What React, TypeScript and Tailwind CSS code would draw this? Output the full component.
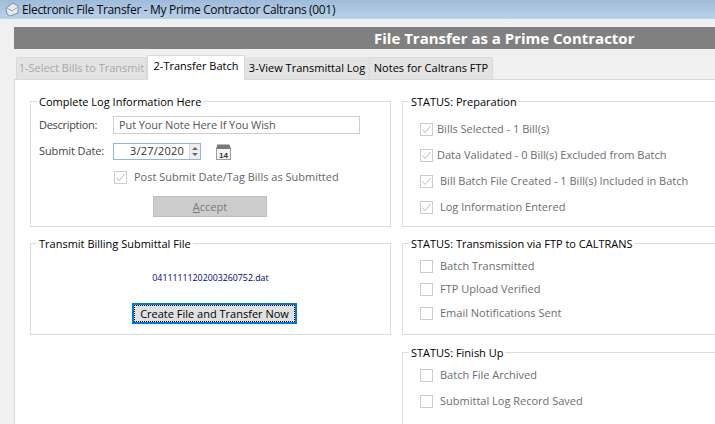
import React from 'react';

const font = { fontFamily: '"Open Sans", "Noto Sans", sans-serif' };

function Check({ checked, className = '' }: { checked?: boolean; className?: string }) {
  return (
    <span className={`w-[13px] h-[13px] border border-[#cccccc] bg-white shrink-0 flex items-center justify-center ${className}`}>
      {checked && (
        <svg width="11" height="11" viewBox="0 0 11 11" fill="none">
          <path d="M1.5 5.5 L4.2 8.5 L9.5 2" stroke="#bcbcbc" strokeWidth="1" />
        </svg>
      )}
    </span>
  );
}

function StatusRow({ label, checked, gap, height }: { label: string; checked?: boolean; gap: string; height: string }) {
  return (
    <div className={`flex items-center text-[11px] text-[#6d6d6d] ${height}`}>
      <Check checked={checked} />
      <span className={`whitespace-nowrap ${gap}`}>{label}</span>
    </div>
  );
}

function Group({ title, className, children }: { title: string; className: string; children: React.ReactNode }) {
  return (
    <fieldset className={`border-[1px] border-[#dcdcdc] m-0 shrink-0 ${className}`}>
      <legend className="ml-[6px] px-[2px] text-[11px] leading-[13px] text-black whitespace-nowrap">{title}</legend>
      {children}
    </fieldset>
  );
}

function CalendarIcon() {
  return (
    <svg width="15" height="17" viewBox="0 0 15 17" className="ml-[15px]">
      <rect x="0.5" y="4.5" width="14" height="12" fill="#f4f4f4" stroke="#9a9a9a" />
      <rect x="1" y="2" width="13" height="4" fill="#7a7a7a" />
      <path d="M2 1v2M4 1v2M6 1v2M8 1v2M10 1v2M12 1v2" stroke="#777777" strokeWidth="1" />
      <text x="7.5" y="15" textAnchor="middle" fontSize="8" fontWeight="700" fill="#333333" fontFamily="Liberation Sans, sans-serif">14</text>
    </svg>
  );
}

export default function App() {
  return (
    <div className="w-[715px] h-[424px] overflow-hidden bg-[#f0f0f0] flex flex-col" style={font}>
      {/* title bar */}
      <div className="h-[19px] shrink-0 bg-gradient-to-b from-[#a0bbd9] to-[#b9d2ec] flex items-center pl-[4px]">
        <svg width="16" height="15" viewBox="0 0 16 15" className="shrink-0">
          <path d="M2 6 L9 1 L14 4 L14 11 L6 14 L3 12 Z" fill="#e6ebf2" stroke="#7f8ea3" strokeWidth="1" />
          <path d="M3 6 L8 9 L14 5" fill="none" stroke="#9aa8ba" strokeWidth="1" />
        </svg>
        <span className="ml-[2px] text-[12px] leading-[16px] text-[#0a0a0a] whitespace-nowrap tracking-[-0.33px]">Electronic File Transfer - My Prime Contractor Caltrans (001)</span>
      </div>

      <div className="flex-1 min-h-0 pl-[14px] pt-[8px] flex flex-col">
        {/* heading band */}
        <div className="h-[22px] shrink-0 bg-[#808080] flex items-center">
          <span className="ml-[360px] text-[15px] leading-[18px] font-bold text-white whitespace-nowrap">File Transfer as a Prime Contractor</span>
        </div>

        {/* tabs */}
        <div className="flex items-end h-[30px] shrink-0 pl-[2px] text-[11px] whitespace-nowrap">
          <div className="h-[22px] w-[131px] bg-[#e3e3e3] border border-b-0 border-[#d9d9d9] rounded-t-[2px] text-[#a8a8a8] flex items-center justify-center">1-Select Bills to Transmit</div>
          <div className="h-[25px] w-[98px] -mb-[1px] relative z-10 bg-white border border-b-0 border-[#d9d9d9] text-black flex items-center justify-center pb-[3px]">2-Transfer Batch</div>
          <div className="h-[22px] w-[125px] bg-[#e3e3e3] border-r border-[#d9d9d9] text-black flex items-center justify-center">3-View Transmittal Log</div>
          <div className="h-[22px] w-[123px] bg-[#e3e3e3] border-r border-t border-[#d9d9d9] rounded-t-[2px] text-black flex items-center justify-center">Notes for Caltrans FTP</div>
        </div>

        {/* page */}
        <div className="flex-1 min-h-0 bg-white border-t border-l border-[#d9d9d9] pl-[15px] pt-[15px] flex gap-[11px] overflow-hidden">
          <div className="w-[361px] shrink-0 flex flex-col gap-[10px]">
            <Group title="Complete Log Information Here" className="h-[132px]">
              <div className="pl-[8px] pt-[8px]">
                <div className="flex items-center h-[18px] text-[11px] text-[#444444]">
                  <span className="w-[74px] tracking-[-0.3px]">Description:</span>
                  <div className="w-[247px] h-[18px] border border-[#cfcfcf] bg-white pl-[5px] leading-[16px] text-[#555555] tracking-[-0.1px]">Put Your Note Here If You Wish</div>
                </div>
                <div className="flex items-center h-[17px] mt-[9px] text-[11px] text-[#444444]">
                  <span className="w-[74px] tracking-[-0.1px]">Submit Date:</span>
                  <div className="w-[88px] h-[17px] border border-[#8db6df] bg-white flex items-center justify-end text-[#333333]">
                    <span className="pr-[5px] tracking-[0.2px]">3/27/2020</span>
                    <span className="w-[11px] h-[15px] bg-[#eeeeee] border-l border-[#d6d6d6] flex flex-col items-center justify-center gap-[3px]">
                      <span className="w-0 h-0 border-x-[3px] border-x-transparent border-b-[3px] border-b-[#666666]" />
                      <span className="w-0 h-0 border-x-[3px] border-x-transparent border-t-[3px] border-t-[#666666]" />
                    </span>
                  </div>
                  <CalendarIcon />
                </div>
                <div className="flex items-center h-[14px] mt-[10px] ml-[75px] text-[11px] text-[#666666] whitespace-nowrap">
                  <Check checked />
                  <span className="ml-[7px]">Post Submit Date/Tag Bills as Submitted</span>
                </div>
                <div className="ml-[114px] mt-[12px] w-[114px] h-[21px] bg-[#cccccc] border border-[#bfbfbf] text-[11px] leading-[19px] text-[#7a7a7a] text-center">
                  <span className="underline">A</span>ccept
                </div>
              </div>
            </Group>

            <Group title="Transmit Billing Submittal File" className="h-[98px]">
              <div className="mt-[22px] text-center text-[8.8px] leading-[12px] text-[#000080]">04111111202003260752.dat</div>
              <div className="ml-[101px] mt-[19px] w-[165px] h-[21px] border-[2px] border-[#0078d7] bg-[#e1e1e1] text-[11px] leading-[17px] text-center text-black outline-1 outline-dotted outline-black outline-offset-[-3px]">Create File and Transfer Now</div>
            </Group>
          </div>

          <div className="w-[340px] shrink-0 flex flex-col gap-[10px]">
            <Group title="STATUS: Preparation" className="h-[132px]">
              <div className="pl-[17px] pt-[8px]">
                <StatusRow checked label="Bills Selected - 1 Bill(s)" gap="ml-[4px]" height="h-[26px]" />
                <StatusRow checked label="Data Validated - 0 Bill(s) Excluded from Batch" gap="ml-[4px]" height="h-[26px]" />
                <StatusRow checked label="Bill Batch File Created - 1 Bill(s) Included in Batch" gap="ml-[7px]" height="h-[26px]" />
                <StatusRow checked label="Log Information Entered" gap="ml-[7px]" height="h-[26px]" />
              </div>
            </Group>
            <Group title="STATUS: Transmission via FTP to CALTRANS" className="h-[98px]">
              <div className="pl-[17px] pt-[5px]">
                <StatusRow label="Batch Transmitted" gap="ml-[7px]" height="h-[23px]" />
                <StatusRow label="FTP Upload Verified" gap="ml-[7px]" height="h-[23px]" />
                <StatusRow label="Email Notifications Sent" gap="ml-[7px]" height="h-[24px]" />
              </div>
            </Group>
            <Group title="STATUS: Finish Up" className="h-[90px] mt-[1px] border-b-0">
              <div className="pl-[17px] pt-[3px]">
                <StatusRow label="Batch File Archived" gap="ml-[7px]" height="h-[26px]" />
                <StatusRow label="Submittal Log Record Saved" gap="ml-[7px]" height="h-[26px]" />
              </div>
            </Group>
          </div>
        </div>
      </div>
    </div>
  );
}
